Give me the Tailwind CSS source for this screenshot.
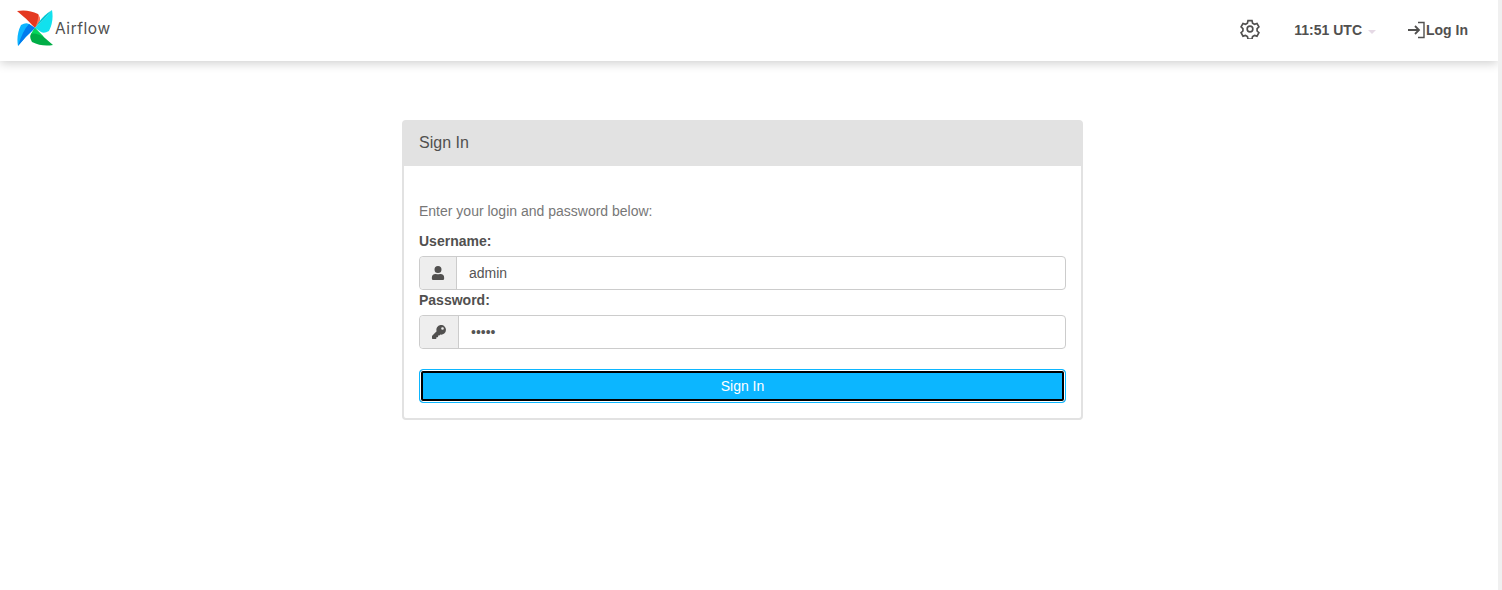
<!DOCTYPE html>
<html><head><meta charset="utf-8"><script src="https://cdn.jsdelivr.net/npm/@tailwindcss/browser@4"></script></head>
<body class="bg-white font-['Liberation_Sans',sans-serif] text-[14px] text-[#51504f] h-[590px] overflow-hidden flex">
<div class="w-[1498px] h-[590px] overflow-hidden shrink-0">
<nav class="h-[61px] bg-white shadow-[0_2px_10px_rgba(0,0,0,0.2)] flex items-center justify-between relative">
  <a class="flex items-center ml-[17px] -mt-[5px]">
    <svg width="36" height="36" viewBox="0 0 36 36" class="block">
      <path d="M0 1 Q11 -1 21 4 Q24 9 22 12 L18 18 Q9 8 0 1Z" fill="#e43921"/>
      <path d="M21 4 Q24 9 22 12 L18 18 Q22 9 21 4Z" fill="#ff7557"/>
      <path d="M35 0 Q37 11 32 21 Q27 24 24 22 L18 18 Q28 9 35 0Z" fill="#11e1ee"/>
      <path d="M35 0 Q28 9 18 18 L22 12 Q27 5 35 0Z" fill="#00c7d4"/>
      <path d="M36 35 Q25 37 15 32 Q12 27 14 24 L18 18 Q27 28 36 35Z" fill="#00ad46"/>
      <path d="M18 18 L14 24 Q18 22 27 27Z" fill="#04d659"/>
      <path d="M1 36 Q-1 25 4 15 Q9 12 12 14 L18 18 Q8 27 1 36Z" fill="#0cb6ff"/>
      <path d="M1 36 Q8 27 18 18 L12 14 Q6 20 1 36Z" fill="#017cee"/>
    </svg>
    <span class="ml-[2px] mt-[2px] font-['Inter',sans-serif] text-[15.5px] tracking-[0.55px] leading-[20px] text-[#51504f]">Airflow</span>
  </a>
  <div class="flex items-center font-bold">
    <svg width="20" height="20" viewBox="0 0 24 24" fill="none" stroke="#51504f" stroke-width="2" stroke-linejoin="miter" class="mr-[34px] -mt-[3px]"><circle cx="12" cy="12" r="3.4"/><path d="M9.6 2h4.800l.7 3 2.300 1.300 3-.9 2.300 4.100-2.200 2.100v2.800l2.200 2.100-2.300 4.100-3-.9-2.300 1.300-.7 3H9.600l-.7-3-2.300-1.300-3 .9-2.300-4.100 2.200-2.100v-2.800L1.300 9.500l2.300-4.100 3 .9 2.300-1.300z"/></svg>
    <span>11:51 UTC</span>
    <span class="ml-[6px] mt-[2px] w-0 h-0 border-x-[4px] border-x-transparent border-t-[4px] border-t-[#e5d9e5]"></span>
    <svg width="20" height="20" viewBox="0 0 20 20" fill="none" stroke="#51504f" class="ml-[30px] -mt-[1px]"><path d="M2 10h10.500M9 6l4 4-4 4" stroke-width="1.800"/><path d="M12 2.500h6v15h-6" stroke-width="1.400"/></svg>
    <span class="mr-[30px]">Log In</span>
  </div>
</nav>
<main class="w-[681px] ml-[402px] mt-[59px] h-[300px] border-2 border-[#e2e2e2] rounded-[4px] bg-white flex flex-col">
  <div class="h-[44px] bg-[#e2e2e2] px-[15px] pb-[2px] flex items-center text-[16px]">Sign In</div>
  <div class="px-[15px] pt-[35px]">
    <p class="leading-[20px] text-[#777]">Enter your login and password below:</p>
    <label class="block font-bold leading-[20px] mt-[10px]">Username:</label>
    <div class="flex h-[34px] mt-[5px] border border-[#ccc] rounded-[4px]">
      <span class="w-[37px] bg-[#eee] border-r border-[#ccc] rounded-l-[4px] flex items-center justify-center">
        <svg width="14" height="14" viewBox="0 0 448 512" fill="#51504f"><path d="M224 256a128 128 0 1 0 0-256 128 128 0 0 0 0 256zm90 32h-17a174 174 0 0 1-146 0h-17A134 134 0 0 0 0 422v42a48 48 0 0 0 48 48h352a48 48 0 0 0 48-48v-42a134 134 0 0 0-134-134z"/></svg>
      </span>
      <span class="flex-1 pl-[12px] flex items-center text-[#555]">admin</span>
    </div>
    <label class="block font-bold leading-[20px]">Password:</label>
    <div class="flex h-[34px] mt-[5px] border border-[#ccc] rounded-[4px]">
      <span class="w-[39px] bg-[#eee] border-r border-[#ccc] rounded-l-[4px] flex items-center justify-center">
        <svg width="14" height="14" viewBox="0 0 512 512" fill="#51504f"><path d="M512 176a176 176 0 0 1-209 173l-24 27a24 24 0 0 1-18 8h-37v40a24 24 0 0 1-24 24h-40v40a24 24 0 0 1-24 24H24a24 24 0 0 1-24-24v-78a24 24 0 0 1 7-17l162-162A176 176 0 1 1 512 176zm-176-48a48 48 0 1 0 96 0 48 48 0 0 0-96 0z"/></svg>
      </span>
      <span class="flex-1 pl-[12px] flex items-center text-[#555]">•••••</span>
    </div>
    <button class="block w-full h-[34px] mt-[20px] bg-[#0cb6ff] text-white rounded-[4px] border border-[#0cb6ff] shadow-[inset_0_0_0_1px_white,inset_0_0_0_3px_black]">Sign In</button>
  </div>
</main>
</div>
<div class="w-[4px] h-[590px] bg-[#f0f0f0]"></div>
</body></html>
